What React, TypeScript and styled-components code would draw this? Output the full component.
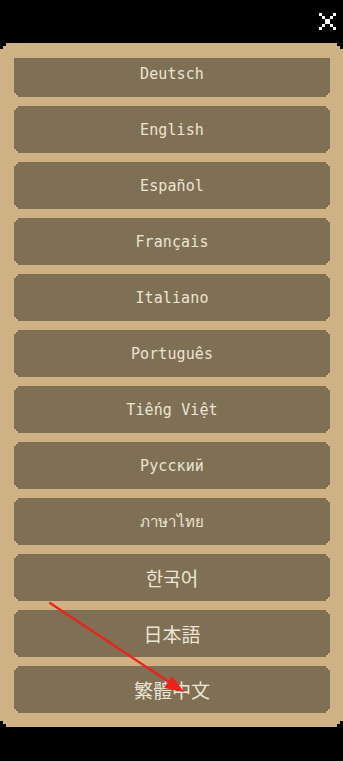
import React, { useLayoutEffect, useRef } from "react";
import styled, { createGlobalStyle } from "styled-components";

const Global = createGlobalStyle`
  html, body { margin: 0; padding: 0; background: #000; }
  body { width: 343px; height: 761px; overflow: hidden; font-family: "DejaVu Sans Mono", "Liberation Mono", monospace; }
`;

const Screen = styled.div`
  position: relative;
  width: 343px;
  height: 761px;
  background: #000;
  display: flex;
  flex-direction: column;
`;

const TopBar = styled.div`
  height: 43px;
  display: flex;
  justify-content: flex-end;
  align-items: flex-start;
  padding: 13px 7px 0 0;
  box-sizing: border-box;
`;

const CloseButton = styled.button`
  width: 17px;
  height: 17px;
  padding: 0;
  border: 0;
  background: transparent;
  display: block;
  cursor: pointer;
`;

const Panel = styled.div`
  height: 684px;
  background: #cfb283;
  padding: 15px 13px 14px 14px;
  box-sizing: border-box;
  clip-path: polygon(
    0 6px, 3px 6px, 3px 3px, 6px 3px, 6px 0,
    calc(100% - 6px) 0, calc(100% - 6px) 3px, calc(100% - 3px) 3px, calc(100% - 3px) 6px, 100% 6px,
    100% calc(100% - 6px), calc(100% - 3px) calc(100% - 6px), calc(100% - 3px) calc(100% - 3px), calc(100% - 6px) calc(100% - 3px), calc(100% - 6px) 100%,
    6px 100%, 6px calc(100% - 3px), 3px calc(100% - 3px), 3px calc(100% - 6px), 0 calc(100% - 6px)
  );
`;

const List = styled.div`
  height: 655px;
  overflow-y: auto;
  scrollbar-width: none;
  display: flex;
  flex-direction: column;
  gap: 9px;
  &::-webkit-scrollbar { display: none; }
`;

const LangButton = styled.button<{ $cjk?: boolean }>`
  flex: 0 0 47px;
  height: 47px;
  width: 100%;
  border: 0;
  margin: 0;
  padding: 0;
  background: #7f6f55;
  color: #ece4d2;
  font-family: ${(p) =>
    p.$cjk
      ? `"Noto Sans CJK KR", "Noto Sans CJK TC", "Noto Sans CJK JP", sans-serif`
      : `"DejaVu Sans Mono", "Liberation Mono", "Noto Sans", monospace`};
  font-size: ${(p) => (p.$cjk ? "19px" : "15px")};
  letter-spacing: ${(p) => (p.$cjk ? "0" : "0.1px")};
  display: flex;
  align-items: center;
  justify-content: center;
  cursor: pointer;
  clip-path: polygon(
    0 4px, 2px 4px, 2px 2px, 4px 2px, 4px 0,
    calc(100% - 4px) 0, calc(100% - 4px) 2px, calc(100% - 2px) 2px, calc(100% - 2px) 4px, 100% 4px,
    100% calc(100% - 4px), calc(100% - 2px) calc(100% - 4px), calc(100% - 2px) calc(100% - 2px), calc(100% - 4px) calc(100% - 2px), calc(100% - 4px) 100%,
    4px 100%, 4px calc(100% - 2px), 2px calc(100% - 2px), 2px calc(100% - 4px), 0 calc(100% - 4px)
  );
`;

const Annotation = styled.svg`
  position: absolute;
  left: 0;
  top: 0;
  pointer-events: none;
`;

const languages: { label: string; cjk?: boolean }[] = [
  { label: "Deutsch" },
  { label: "English" },
  { label: "Español" },
  { label: "Français" },
  { label: "Italiano" },
  { label: "Português" },
  { label: "Tiếng Việt" },
  { label: "Русский" },
  { label: "ภาษาไทย" },
  { label: "한국어", cjk: true },
  { label: "日本語", cjk: true },
  { label: "繁體中文", cjk: true },
];

const PixelX = () => (
  <svg width="17" height="17" viewBox="0 0 17 17" shapeRendering="crispEdges">
    <g fill="#fff">
      <rect x="0" y="0" width="3" height="3" />
      <rect x="14" y="0" width="3" height="3" />
      <rect x="3" y="3" width="3" height="3" />
      <rect x="11" y="3" width="3" height="3" />
      <rect x="6" y="6" width="5" height="5" />
      <rect x="3" y="11" width="3" height="3" />
      <rect x="11" y="11" width="3" height="3" />
      <rect x="0" y="14" width="3" height="3" />
      <rect x="14" y="14" width="3" height="3" />
    </g>
  </svg>
);

export default function App() {
  const listRef = useRef<HTMLDivElement>(null);
  useLayoutEffect(() => {
    if (listRef.current) listRef.current.scrollTop = listRef.current.scrollHeight;
  }, []);
  return (
    <>
      <Global />
      <Screen>
        <TopBar>
          <CloseButton aria-label="close">
            <PixelX />
          </CloseButton>
        </TopBar>
        <Panel>
          <List ref={listRef}>
            {languages.map((l) => (
              <LangButton key={l.label} $cjk={l.cjk}>
                {l.label}
              </LangButton>
            ))}
          </List>
        </Panel>
        <Annotation width="343" height="761" viewBox="0 0 343 761">
          <line x1="50" y1="603" x2="172" y2="684" stroke="#f0201a" strokeWidth="2.2" strokeLinecap="round" />
          <polygon points="184,692 164,688 172,676" fill="#f0201a" />
        </Annotation>
      </Screen>
    </>
  );
}
